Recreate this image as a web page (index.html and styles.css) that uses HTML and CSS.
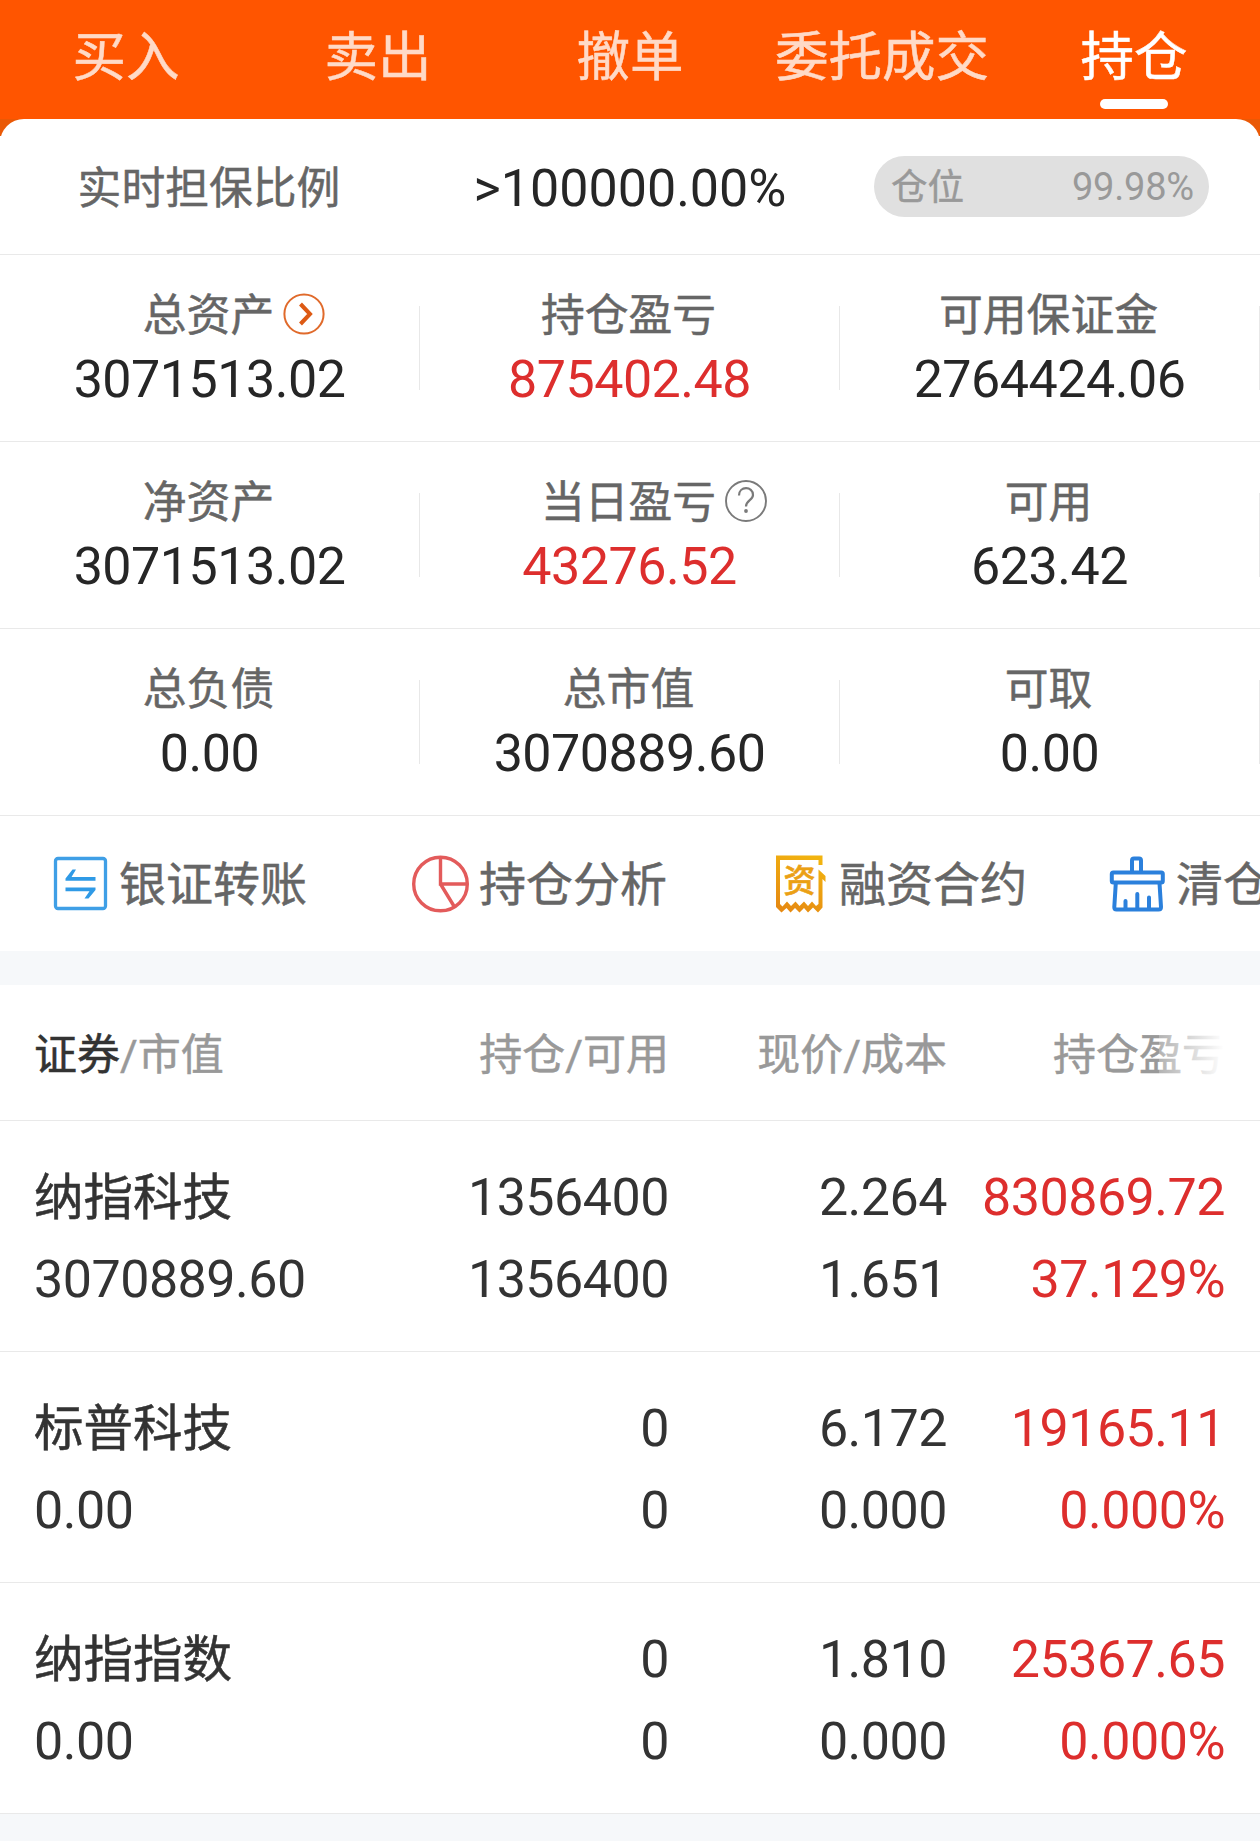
FILE: index.html
```html
<!DOCTYPE html>
<html lang="zh-CN">
<head>
<meta charset="utf-8">
<title>持仓</title>
<link rel="stylesheet" href="styles.css">
</head>
<body>
<nav class="tabs">
  <span class="tab">买入</span>
  <span class="tab">卖出</span>
  <span class="tab">撤单</span>
  <span class="tab">委托成交</span>
  <span class="tab tab-active">持仓</span>
</nav>
<div class="card-wrap">
  <section class="summary">
    <div class="ratio">
      <span class="ratio-label">实时担保比例</span>
      <span class="ratio-value">&gt;100000.00%</span>
      <div class="pill"><span class="pill-label">仓位</span><span class="pill-value">99.98%</span></div>
    </div>
    <div class="stats">
      <div class="stat"><span class="label">总资产<svg class="badge" viewBox="0 0 42 42"><circle cx="21" cy="21" r="19.6" fill="none" stroke="#e06a2b" stroke-width="2"/><path d="M17.500 11 L27 21 L17.500 31" fill="none" stroke="#dd5a14" stroke-width="4"/></svg></span><span class="value">3071513.02</span></div>
      <div class="stat"><span class="label">持仓盈亏</span><span class="value red">875402.48</span></div>
      <div class="stat"><span class="label">可用保证金</span><span class="value">2764424.06</span></div>
    </div>
    <div class="stats">
      <div class="stat"><span class="label">净资产</span><span class="value">3071513.02</span></div>
      <div class="stat"><span class="label">当日盈亏<svg class="badge" viewBox="0 0 42 42"><circle cx="21" cy="21" r="20" fill="none" stroke="#7a7a7a" stroke-width="1.900"/><path d="M14 15.5 C14 5.8 28 5.8 28 15 C28 20 21 20.500 21 26.500" fill="none" stroke="#7a7a7a" stroke-width="2.200"/><circle cx="21" cy="31" r="1.900" fill="#7a7a7a"/></svg></span><span class="value red">43276.52</span></div>
      <div class="stat"><span class="label">可用</span><span class="value">623.42</span></div>
    </div>
    <div class="stats">
      <div class="stat"><span class="label">总负债</span><span class="value">0.00</span></div>
      <div class="stat"><span class="label">总市值</span><span class="value">3070889.60</span></div>
      <div class="stat"><span class="label">可取</span><span class="value">0.00</span></div>
    </div>
    <div class="actions">
      <div class="action">
        <svg class="icon" viewBox="0 0 60 60"><rect x="4.500" y="4.500" width="50" height="50" rx="2.500" fill="none" stroke="#3f9fe6" stroke-width="3.300"/><path fill="#2f9ae6" d="M44.500 23 V26.800 H14.500 V24.500 L21.500 15.500 H25 L20.500 23 Z M14.500 33.500 H44.500 V36 L37.500 44.500 H33.500 L38.500 37.200 H14.500 Z"/></svg>
        <span>银证转账</span>
      </div>
      <div class="action">
        <svg class="icon" viewBox="0 0 60 60"><g fill="none" stroke="#e35b5b" stroke-width="3.400"><circle cx="29.500" cy="30" r="26.800"/><path d="M29.500 3 V30 H56.500 M29.500 30 L43.500 53"/></g></svg>
        <span>持仓分析</span>
      </div>
      <div class="action">
        <svg class="icon" viewBox="0 0 60 60"><defs><linearGradient id="gold" x1="0.700" y1="0" x2="0.300" y2="1"><stop offset="0" stop-color="#f2b40f"/><stop offset="1" stop-color="#e68a12"/></linearGradient></defs><path fill="url(#gold)" d="M5 1.500 H51.500 V11 H47.500 V6 H9 V50 L11.500 52.500 L16 47.500 L20 52 L24.500 47.500 L28.500 52 L33 47.500 L37 52 L41 47.500 L45 52 L47.500 50 V15.500 L54.500 22 V28 L51.500 25 V53.500 L47 58.500 L42 53.500 L37 58.500 L33 54 L28.500 58.500 L24 54 L19.500 58.500 L15.500 54 L10.500 58.500 L5 53 Z"/><text class="seal" x="28.500" y="38" text-anchor="middle">资</text></svg>
        <span>融资合约</span>
      </div>
      <div class="action action-last">
        <svg class="icon" viewBox="0 0 60 60"><g fill="none" stroke="#2b80dc" stroke-width="4" stroke-linejoin="round" stroke-linecap="round"><path d="M24 18 V6.500 Q24 4.500 26 4.500 H31 Q33 4.500 33 6.500 V18"/><rect x="3.800" y="18.500" width="51" height="10" rx="1.500"/><path d="M7.800 29 L6.300 53 Q6.300 55.500 8.500 55.500 H50.500 Q53 55.500 53 53 L51.500 29"/><path d="M17.500 47 V55 M29.300 40 V55 M41 43.500 V55"/></g></svg>
        <span>清仓</span>
      </div>
    </div>
  </section>
</div>
<section class="holdings">
  <div class="row head">
    <span><b class="strong">证券</b>/市值</span><span>持仓/可用</span><span>现价/成本</span><span class="fade">持仓盈亏</span>
  </div>
  <div class="row item">
    <span class="name">纳指科技</span><span>1356400</span><span>2.264</span><span class="red">830869.72</span>
    <span>3070889.60</span><span>1356400</span><span>1.651</span><span class="red">37.129%</span>
  </div>
  <div class="row item">
    <span class="name">标普科技</span><span>0</span><span>6.172</span><span class="red">19165.11</span>
    <span>0.00</span><span>0</span><span>0.000</span><span class="red">0.000%</span>
  </div>
  <div class="row item">
    <span class="name">纳指指数</span><span>0</span><span>1.810</span><span class="red">25367.65</span>
    <span>0.00</span><span>0</span><span>0.000</span><span class="red">0.000%</span>
  </div>
</section>
</body>
</html>
```
FILE: styles.css
```css
* { box-sizing: border-box; }
body {
  margin: 0;
  width: 1260px;
  height: 1841px;
  overflow: hidden;
  background: #f6f8fa;
  font-family: Roboto, "Noto Sans CJK SC", sans-serif;
  color: #262626;
}

/* Slightly sturdier strokes for the Chinese labels */
.tab, .ratio-label, .pill-label, .label, .action span, .head, .name {
  -webkit-text-stroke: 0.5px currentColor;
}

/* Top tabs */
.tabs {
  display: grid;
  grid-template-columns: repeat(5, 252px);
  height: 119px;
  background: #ff5500;
}
.tab {
  position: relative;
  text-align: center;
  font-size: 53.5px;
  line-height: 116px;
  color: #ffdac7;
}
.tab-active { color: #fff; }
.tab-active::after {
  content: "";
  position: absolute;
  left: 92px;
  top: 99px;
  width: 68px;
  height: 10px;
  border-radius: 5px;
  background: #fff;
}

/* Account summary */
.card-wrap { background: linear-gradient(#ea5906 17px, #fff 17px); }
.summary {
  height: 832px;
  background: #fff;
  border-radius: 24px 24px 0 0;
  overflow: hidden;
}
.ratio {
  display: grid;
  grid-template-columns: 420px 420px 420px;
  align-items: center;
  height: 136px;
  border-bottom: 1px solid #e9e9e9;
  text-align: center;
}
.ratio-label { font-size: 43.8px; color: #666; line-height: 60px; padding: 5px 2px 0 0; }
.ratio-value { font-size: 52px; line-height: 60px; padding-top: 4px; }
.pill {
  display: flex;
  justify-content: space-between;
  margin-left: 34px;
  width: 335px;
  height: 61px;
  padding: 0 15px 0 17px;
  border-radius: 31px;
  background: #e0e0e0;
  color: #999;
}
.pill-label { font-size: 36.5px; line-height: 64px; }
.pill-value { font-size: 38px; line-height: 63px; letter-spacing: -0.2px; }
.stats {
  display: grid;
  grid-template-columns: repeat(3, 420px);
  align-items: center;
  height: 187px;
  border-bottom: 1px solid #e9e9e9;
}
.stat {
  display: flex;
  flex-direction: column;
  align-items: center;
  height: 84px;
  border-right: 1px solid #e8e8e8;
}
.label { position: relative; left: -1px; font-size: 43.8px; line-height: 60px; margin-top: -20px; color: #666; }
.badge { position: absolute; left: calc(100% + 9px); top: 7px; width: 42px; height: 42px; }
.value { font-size: 52px; line-height: 60px; margin-top: 4px; letter-spacing: -0.5px; }
.red { color: #dd2e2d; }
.actions {
  display: flex;
  gap: 104px;
  padding-left: 51px;
  height: 135px;
  align-items: center;
}
.action {
  display: flex;
  flex: none;
  gap: 8px;
  width: 256px;
  align-items: center;
  font-size: 47px;
  line-height: 60px;
  color: #666;
  white-space: nowrap;
}
.action span { padding-top: 3px; }
.action-last { margin-left: -23px; }
.icon { flex: none; width: 60px; height: 60px; }
.seal { font-size: 32px; font-weight: 500; fill: #eba014; stroke: #eba014; stroke-width: 0.6px; }

/* Holdings table */
.holdings { margin-top: 34px; background: #fff; }
.row {
  display: grid;
  grid-template-columns: 321px 314px 278px 278px;
  padding: 0 35px 0 34px;
  border-bottom: 1px solid #e9e9e9;
  text-align: right;
}
.row > :nth-child(4n + 1) { text-align: left; }
.head { height: 136px; font-size: 43px; line-height: 140px; color: #999; }
.strong { font-weight: 400; color: #333; }
.fade { position: relative; }
.fade::after {
  content: "";
  position: absolute;
  top: 40px;
  right: -15px;
  width: 81px;
  height: 60px;
  background: linear-gradient(90deg, rgba(255,255,255,.25), #fff 80%);
}
.item {
  height: 231px;
  padding-top: 36px;
  grid-auto-rows: 82px;
  font-size: 52px;
  line-height: 82px;
  letter-spacing: -0.5px;
  color: #333;
}
.item .red { color: #dd2e2d; }
.item .name { font-size: 49.5px; line-height: 83px; letter-spacing: 0; }
```
